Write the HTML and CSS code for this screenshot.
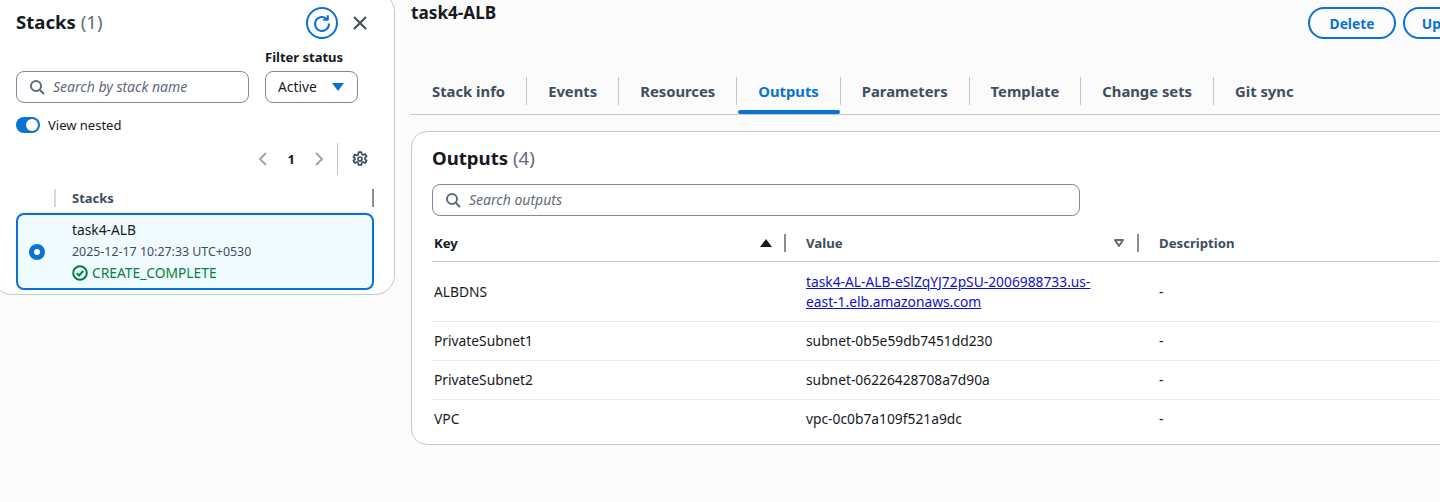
FILE: index.html
```html
<!DOCTYPE html>
<html lang="en">
<head>
  <meta charset="UTF-8" />
  <title>Stacks - Outputs</title>
  <link rel="stylesheet" href="styles.css">
</head>
<body>

  <!-- Stacks side panel -->
  <aside class="stacks-panel">
    <div class="panel-head">
      <h2 class="panel-title">Stacks <span class="count">(1)</span></h2>
      <div class="panel-actions">
        <span class="refresh-btn">
          <svg width="20" height="20" viewBox="0 0 20 20" fill="none" stroke="#0972d3" stroke-width="2">
            <path d="M15.2 6.2A7 7 0 1 0 17 10.5" />
            <path d="M15.8 2.2v4.6h-4.6" stroke-linejoin="round" />
          </svg>
        </span>
        <svg class="close-icon" width="16" height="16" viewBox="0 0 16 16" fill="none" stroke="#414d5c" stroke-width="2">
          <path d="M2 2l12 12M14 2L2 14" />
        </svg>
      </div>
    </div>

    <div class="filter-row">
      <div class="search-box stack-search">
        <svg width="16" height="16" viewBox="0 0 16 16" fill="none" stroke="#5f6b7a" stroke-width="2">
          <circle cx="7" cy="7" r="5" />
          <path d="M10.7 10.7L15 15" />
        </svg>
        <span class="placeholder">Search by stack name</span>
      </div>
      <div class="status-filter">
        <div class="filter-label">Filter status</div>
        <div class="status-select">
          <span class="status-value">Active</span>
          <span class="caret"></span>
        </div>
      </div>
    </div>

    <div class="toggle-row">
      <span class="toggle"><span class="toggle-knob"></span></span>
      <span>View nested</span>
    </div>

    <div class="pager">
      <svg width="12" height="16" viewBox="0 0 12 16" fill="none" stroke="#9ba7b6" stroke-width="2"><path d="M9 2L3 8l6 6" /></svg>
      <span class="page-num">1</span>
      <svg width="12" height="16" viewBox="0 0 12 16" fill="none" stroke="#9ba7b6" stroke-width="2"><path d="M3 2l6 6-6 6" /></svg>
      <span class="pager-sep"></span>
      <svg width="16" height="16" viewBox="0 0 16 16" fill="none" stroke="#414d5c" stroke-width="2">
        <path d="M6.6 1.2h2.8l.4 2 1.5.7 1.8-1 1.5 2.4-1.6 1.4v1.6l1.6 1.4-1.5 2.4-1.8-1-1.5.7-.4 2H6.6l-.4-2-1.5-.7-1.8 1-1.5-2.4 1.6-1.4V7.3L1.4 5.9l1.5-2.4 1.8 1 1.5-.7z" stroke-linejoin="round" stroke-width="1.7" />
        <circle cx="8" cy="8" r="2" stroke-width="1.7" />
      </svg>
    </div>

    <div class="stacks-head">
      <span class="head-mark"></span>
      <span class="head-name">Stacks</span>
      <span class="head-end"></span>
    </div>

    <div class="stack-card">
      <span class="radio"></span>
      <div class="stack-info">
        <div class="stack-name">task4-ALB</div>
        <div class="stack-date">2025-12-17 10:27:33 UTC+0530</div>
        <div class="stack-status">
          <svg width="16" height="16" viewBox="0 0 16 16" fill="none" stroke="#037f3c" stroke-width="2">
            <circle cx="8" cy="8" r="6.8" />
            <path d="M4.8 8.2l2.3 2.3 4.2-4.6" />
          </svg>
          CREATE_COMPLETE
        </div>
      </div>
    </div>
  </aside>

  <!-- Stack details -->
  <main class="details">
    <div class="details-head">
      <h1 class="stack-title">task4-ALB</h1>
      <div class="head-buttons">
        <span class="pill-btn">Delete</span>
        <span class="pill-btn">Update</span>
      </div>
    </div>

    <nav class="tabs">
      <span class="tab">Stack info</span>
      <span class="tab">Events</span>
      <span class="tab">Resources</span>
      <span class="tab active">Outputs</span>
      <span class="tab">Parameters</span>
      <span class="tab">Template</span>
      <span class="tab">Change sets</span>
      <span class="tab">Git sync</span>
    </nav>

    <section class="outputs-card">
      <h2 class="outputs-title">Outputs <span class="count">(4)</span></h2>
      <div class="search-box output-search">
        <svg width="16" height="16" viewBox="0 0 16 16" fill="none" stroke="#5f6b7a" stroke-width="2">
          <circle cx="7" cy="7" r="5" />
          <path d="M10.7 10.7L15 15" />
        </svg>
        <span class="placeholder">Search outputs</span>
      </div>

      <div class="row header-row">
        <div class="cell key-head">Key
          <span class="sort-up"></span><span class="col-sep"></span>
        </div>
        <div class="cell">Value
          <svg class="sort-down" width="12" height="10" viewBox="0 0 12 10" fill="none" stroke="#5f6b7a" stroke-width="2"><path d="M2 2h8L6 8z" stroke-linejoin="round" /></svg><span class="col-sep"></span>
        </div>
        <div class="cell">Description</div>
      </div>
      <div class="row tall-row">
        <div class="cell">ALBDNS</div>
        <div class="cell"><a class="output-link" href="#">task4-AL-ALB-eSlZqYJ72pSU-2006988733.us-east-1.elb.amazonaws.com</a></div>
        <div class="cell">-</div>
      </div>
      <div class="row">
        <div class="cell">PrivateSubnet1</div>
        <div class="cell">subnet-0b5e59db7451dd230</div>
        <div class="cell">-</div>
      </div>
      <div class="row">
        <div class="cell">PrivateSubnet2</div>
        <div class="cell">subnet-06226428708a7d90a</div>
        <div class="cell">-</div>
      </div>
      <div class="row last-row">
        <div class="cell">VPC</div>
        <div class="cell">vpc-0c0b7a109f521a9dc</div>
        <div class="cell">-</div>
      </div>
    </section>
  </main>

</body>
</html>
```

FILE: styles.css
```css
* {
  box-sizing: border-box;
}

body {
  margin: 0;
  height: 502px;
  overflow: hidden;
  display: flex;
  align-items: flex-start;
  background-color: #fbfbfb;
  color: #16191f;
  font-family: "Noto Sans", sans-serif;
  font-size: 13.8px;
}

h1, h2 {
  margin: 0;
}

.count {
  color: #5f6b7a;
  font-weight: 400;
}

/* Side panel: its top and left edges run past the window */
.stacks-panel {
  flex: 0 0 403px;
  height: 303px;
  margin: -8px 0 0 -8px;
  padding: 7px 20px 0 24px;
  background-color: #fff;
  border: 1px solid #c6c6cd;
  border-radius: 20px;
}

.panel-head {
  display: flex;
  justify-content: space-between;
  align-items: center;
  height: 44px;
  margin-left: -1px;
}

.panel-title {
  padding-bottom: 2px;
  font-size: 18.6px;
  font-weight: 700;
}

.panel-actions {
  display: flex;
  align-items: center;
  gap: 14px;
  margin-top: 1px;
  padding-right: 6px;
}

.refresh-btn {
  width: 32px;
  height: 32px;
  display: flex;
  align-items: center;
  justify-content: center;
  border: 2px solid #0972d3;
  border-radius: 50%;
}

.filter-row {
  display: flex;
  align-items: flex-end;
  gap: 16px;
  margin: 4px 0 0 -1px;
}

.search-box {
  display: flex;
  align-items: center;
  gap: 8px;
  height: 32px;
  padding-left: 12px;
  background-color: #fff;
  border: 1px solid #7d8998;
  border-radius: 8px;
}

.stack-search {
  width: 233px;
}

.placeholder {
  margin-bottom: 2px;
  color: #5f6b7a;
  font-size: 14px;
  font-style: italic;
}

.filter-label {
  font-size: 13px;
  font-weight: 700;
  margin-bottom: 5px;
  line-height: 18px;
}

.status-select {
  display: flex;
  align-items: center;
  justify-content: space-between;
  width: 93px;
  height: 32px;
  padding: 0 13px 0 12px;
  border: 1px solid #7d8998;
  border-radius: 8px;
}

.status-value {
  margin-bottom: 2px;
}

.caret {
  width: 0;
  height: 0;
  border-left: 6px solid transparent;
  border-right: 6px solid transparent;
  border-top: 8px solid #0972d3;
}

.toggle-row {
  display: flex;
  align-items: center;
  gap: 8px;
  margin: 13px 0 0 -1px;
  height: 18px;
  font-size: 13px;
}

.toggle {
  display: flex;
  justify-content: flex-end;
  align-items: center;
  width: 24px;
  height: 16px;
  padding-right: 2px;
  background-color: #0972d3;
  border-radius: 8px;
}

.toggle-knob {
  width: 12px;
  height: 12px;
  background-color: #fff;
  border-radius: 50%;
}

.pager {
  display: flex;
  align-items: center;
  justify-content: flex-end;
  height: 32px;
  margin-top: 9px;
  padding-right: 6px;
}

.page-num {
  margin: 0 18px 0 19px;
  font-size: 13px;
  font-weight: 700;
}

.pager-sep {
  width: 1px;
  height: 32px;
  margin: 0 14px 0 12px;
  background-color: #c6c6cd;
}

.stacks-head {
  display: flex;
  align-items: flex-start;
  height: 24px;
  margin: 14px 0 0 -1px;
  color: #414d5c;
  font-size: 13px;
  font-weight: 700;
  line-height: 18px;
  border-bottom: 1px solid #e9ebed;
}

.head-mark {
  width: 2px;
  height: 18px;
  margin-left: 38px;
  background-color: #d5d8dc;
}

.head-name {
  margin-left: 16px;
  flex: 1;
}

.head-end {
  width: 2px;
  height: 18px;
  background-color: #8c8c94;
}

.stack-card {
  display: flex;
  align-items: center;
  height: 77px;
  margin-left: -1px;
  padding-left: 11px;
  background-color: #f0fbff;
  border: 2px solid #0972d3;
  border-radius: 8px;
}

.radio {
  width: 16px;
  height: 16px;
  margin-right: 27px;
  background-color: #fff;
  border: 5px solid #0972d3;
  border-radius: 50%;
}

.stack-info {
  padding-bottom: 1px;
}

.stack-name {
  line-height: 20px;
}

.stack-date {
  color: #414d5c;
  font-size: 12.4px;
  line-height: 23px;
}

.stack-status {
  display: flex;
  align-items: center;
  gap: 4px;
  color: #037f3c;
  line-height: 20px;
}

/* Details */
.details {
  flex: 1;
  min-width: 0;
  padding-left: 16px;
}

.details-head {
  display: flex;
  justify-content: space-between;
  height: 62px;
}

.stack-title {
  font-size: 17.2px;
  line-height: 26px;
  font-weight: 700;
}

.head-buttons {
  display: flex;
  gap: 7px;
  margin-top: 7px;
  margin-right: -51px;
}

.pill-btn {
  display: flex;
  align-items: center;
  justify-content: center;
  width: 88px;
  height: 32px;
  color: #0972d3;
  font-weight: 700;
  border: 2px solid #0972d3;
  border-radius: 16px;
}

.tabs {
  display: flex;
  height: 53px;
  border-bottom: 1px solid #c6c6cd;
  padding-top: 15px;
}

.tab {
  position: relative;
  height: 28px;
  padding: 0 21px;
  color: #414d5c;
  font-size: 14.8px;
  font-weight: 700;
  line-height: 29px;
  border-right: 1px solid #c6c6cd;
}

.tab:last-child {
  border-right: none;
}

.tab.active {
  color: #0972d3;
}

.tab.active::after {
  content: "";
  position: absolute;
  left: 1px;
  right: 0;
  top: 33px;
  height: 4px;
  background-color: #0972d3;
  border-radius: 2px;
}

.outputs-card {
  margin-top: 16px;
  margin-right: -20px;
  height: 314px;
  padding: 0 20px;
  background-color: #fff;
  border: 1px solid #c6c6cd;
  border-radius: 16px;
}

.outputs-title {
  margin-top: 14px;
  font-size: 18.6px;
  line-height: 24px;
  font-weight: 700;
}

.output-search {
  width: 648px;
  margin-top: 14px;
}

.row {
  display: grid;
  grid-template-columns: 354px 353px 1fr;
  align-items: center;
  height: 39px;
  border-bottom: 1px solid #e9ebed;
  line-height: 20px;
}

.cell {
  display: flex;
  align-items: center;
  padding-left: 2px;
}

.cell + .cell {
  padding-left: 20px;
}

.header-row {
  height: 37px;
  margin-top: 9px;
  color: #414d5c;
  font-size: 13.2px;
  font-weight: 700;
  border-bottom-color: #c6c6cd;
}

.key-head {
  color: #16191f;
}

.tall-row {
  height: 60px;
}

.last-row {
  height: 38px;
  border-bottom: none;
}

.output-link {
  color: #1111c4;
  width: 300px;
}

.col-sep {
  width: 2px;
  height: 18px;
  margin-left: 12px;
  background-color: #8c8c94;
}

.sort-up {
  width: 0;
  height: 0;
  margin-left: auto;
  border-left: 6px solid transparent;
  border-right: 6px solid transparent;
  border-bottom: 8px solid #16191f;
}

.sort-down {
  margin-left: auto;
}
```
